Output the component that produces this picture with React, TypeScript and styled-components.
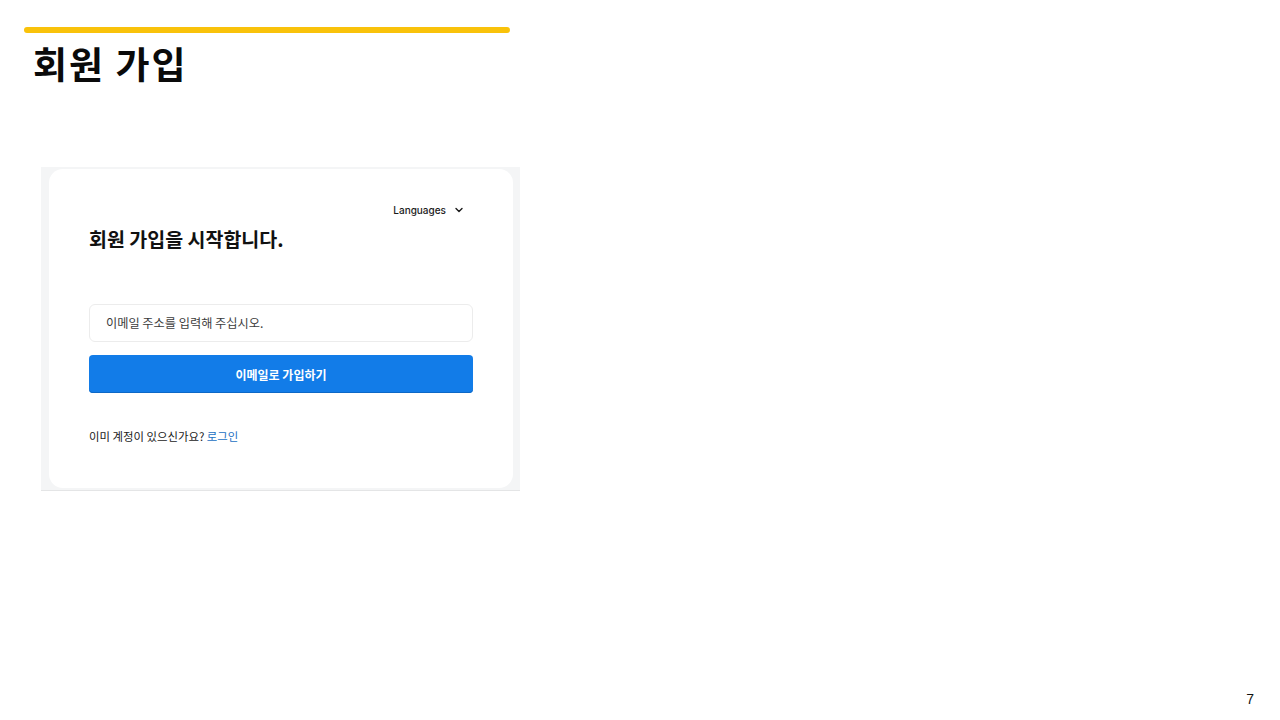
import React from 'react';
import styled, { createGlobalStyle } from 'styled-components';

const GlobalStyle = createGlobalStyle`
  html, body {
    margin: 0;
    padding: 0;
    background: #ffffff;
  }
  body {
    font-family: 'Noto Sans CJK KR', 'Noto Sans', sans-serif;
    color: #111;
  }
`;

const SSlide = styled.div`
  position: relative;
  width: 1280px;
  height: 720px;
  overflow: hidden;
  background: #fff;
  display: flex;
  flex-direction: column;
`;

const SHeader = styled.header`
  padding: 27px 0 0 24px;
  display: flex;
  flex-direction: column;
`;

const SAccent = styled.div`
  width: 486px;
  height: 6px;
  border-radius: 3px;
  background: #f9c20a;
`;

const STitle = styled.h1`
  margin: 4px 0 0 9px;
  font-size: 37px;
  line-height: 52px;
  font-weight: 700;
  letter-spacing: 2px;
  color: #0a0a0a;
`;

const SShot = styled.div`
  margin: 78px 0 0 41px;
  width: 479px;
  height: 324px;
  box-sizing: border-box;
  padding: 2px 7px 2px 8px;
  background: #f4f5f6;
  border-bottom: 1px solid #e4e5e6;
  display: flex;
`;

const SCard = styled.div`
  flex: 1;
  background: #fff;
  border-radius: 14px;
  padding: 33px 40px 0 40px;
  display: flex;
  flex-direction: column;
`;

const SLangRow = styled.div`
  display: flex;
  justify-content: flex-end;
  padding-right: 9px;
`;

const SLang = styled.button`
  display: flex;
  align-items: center;
  gap: 8px;
  border: 0;
  padding: 0;
  background: none;
  font-family: Inter, 'Noto Sans', sans-serif;
  font-size: 10px;
  font-weight: 500;
  color: #1a1a1a;
  line-height: 16px;
`;

const SHeading = styled.h2`
  margin: 8px 0 0;
  font-size: 19.5px;
  line-height: 26px;
  font-weight: 700;
  color: #111;
`;

const SInput = styled.div`
  margin-top: 52px;
  height: 38px;
  box-sizing: border-box;
  border: 1px solid #ececec;
  border-radius: 6px;
  padding: 0 16px;
  display: flex;
  align-items: center;
  font-size: 12.2px;
  color: #3c3c3c;
`;

const SButton = styled.button`
  margin-top: 13px;
  height: 38px;
  border: 0;
  border-radius: 4px;
  background: #127ce8;
  color: #fff;
  font-family: 'Noto Sans CJK KR', sans-serif;
  font-size: 12px;
  font-weight: 700;
  box-shadow: inset 0 -1px 0 #0d68c6;
`;

const SFooter = styled.p`
  margin: 34px 0 0;
  font-size: 11.4px;
  line-height: 18px;
  color: #1a1a1a;
`;

const SLink = styled.a`
  color: #1b6fc2;
  text-decoration: none;
`;

const SPage = styled.span`
  position: absolute;
  right: 26px;
  bottom: 13px;
  font-family: 'Liberation Sans', Arial, sans-serif;
  font-size: 14px;
  color: #111;
`;

const Chevron = () => (
  <svg width="10" height="10" viewBox="0 0 10 10" fill="none">
    <path d="M2 3.5 L5 6.5 L8 3.5" stroke="#1a1a1a" strokeWidth="1.4" strokeLinecap="round" strokeLinejoin="round" />
  </svg>
);

const App = () => (
  <>
    <GlobalStyle />
    <SSlide>
      <SHeader>
        <SAccent />
        <STitle>회원 가입</STitle>
      </SHeader>
      <SShot>
        <SCard>
          <SLangRow>
            <SLang>
              Languages
              <Chevron />
            </SLang>
          </SLangRow>
          <SHeading>회원 가입을 시작합니다.</SHeading>
          <SInput>이메일 주소를 입력해 주십시오.</SInput>
          <SButton>이메일로 가입하기</SButton>
          <SFooter>
            이미 계정이 있으신가요? <SLink href="#">로그인</SLink>
          </SFooter>
        </SCard>
      </SShot>
      <SPage>7</SPage>
    </SSlide>
  </>
);

export default App;
